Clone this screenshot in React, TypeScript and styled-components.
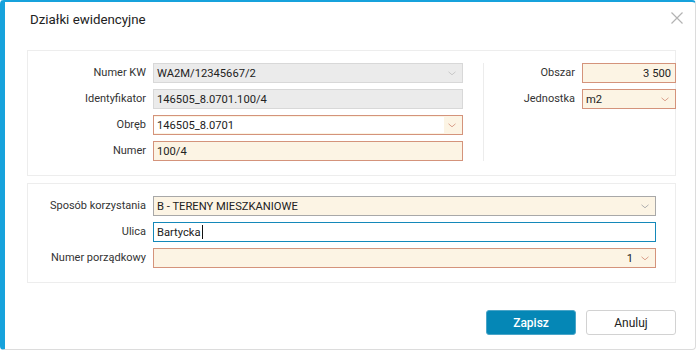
import React from "react";
import styled, { createGlobalStyle } from "styled-components";

const Global = createGlobalStyle`
  html, body { margin: 0; padding: 0; background: #ffffff; }
  body { font-family: Roboto, "Liberation Sans", Arial, sans-serif; }
  * { box-sizing: border-box; }
`;

const Dialog = styled.div`
  width: 696px;
  height: 350px;
  background: #fff;
  border-left: 5px solid #16a2dc;
  border-top: 2px solid #16a2dc;
  border-right: 1px solid #dcdcdc;
  border-bottom: 1px solid #dcdcdc;
  border-radius: 4px;
  display: flex;
  flex-direction: column;
`;

const Header = styled.div`
  height: 34px;
  display: flex;
  align-items: center;
  justify-content: space-between;
  padding: 0 12px 0 25px;
`;

const Title = styled.div`
  font-size: 13.3px;
  color: #222;
`;

const Close = styled.button`
  border: 0;
  background: none;
  padding: 0;
  width: 12px;
  height: 12px;
  display: flex;
  margin-top: -2px;
  cursor: pointer;
`;

const Body = styled.div`
  padding: 14px 19px 0 22px;
  display: flex;
  flex-direction: column;
  gap: 7px;
`;

const Section = styled.div<{ $split?: boolean }>`
  border: 1px solid #ededed;
  padding: 12px 19px 14px 0;
  display: grid;
  grid-template-columns: ${(p) => (p.$split ? "435px 1px 172px" : "1fr")};
  column-gap: 20px;
`;

const Fields = styled.div<{ $label: number }>`
  display: grid;
  grid-template-columns: ${(p) => p.$label}px 1fr;
  column-gap: 7px;
  row-gap: 6px;
  align-content: start;
`;

const Divider = styled.div`
  background: #ececec;
  height: 98px;
`;

const Label = styled.div`
  font-size: 11px;
  color: #333;
  text-align: right;
  height: 20px;
  line-height: 20px;
  white-space: nowrap;
`;

type Variant = "disabled" | "required" | "neutral" | "focus";

const boxColors: Record<Variant, { bg: string; border: string; arrow: string }> = {
  disabled: { bg: "#ebebeb", border: "#d8d8d8", arrow: "#c8c8c8" },
  required: { bg: "#fcf4e4", border: "#d4937b", arrow: "#d9a08c" },
  neutral: { bg: "#fcf4e4", border: "#a8a8a8", arrow: "#b0b0b0" },
  focus: { bg: "#ffffff", border: "#1488b9", arrow: "#999" },
};

const Box = styled.div<{ $v: Variant; $inset?: boolean }>`
  height: 20px;
  background: ${(p) => boxColors[p.$v].bg};
  border: 1px solid ${(p) => boxColors[p.$v].border};
  display: flex;
  align-items: stretch;
  padding: ${(p) => (p.$inset ? "1px 0 1px 0" : "0")};
  font-size: 11.2px;
  color: #222;
`;

const Value = styled.div<{ $right?: boolean; $white?: boolean }>`
  flex: 1;
  display: flex;
  align-items: center;
  justify-content: ${(p) => (p.$right ? "flex-end" : "flex-start")};
  padding: 0 4px 0 3px;
  background: ${(p) => (p.$white ? "#fff" : "transparent")};
  white-space: nowrap;
  overflow: hidden;
`;

const Caret = styled.span`
  display: inline-block;
  width: 1px;
  height: 14px;
  background: #111;
  margin-left: 1px;
`;

const ArrowCell = styled.div`
  width: 18px;
  display: flex;
  align-items: center;
  justify-content: center;
  padding-right: 2px;
`;

const Footer = styled.div`
  margin-top: 27px;
  padding-right: 19px;
  display: flex;
  justify-content: flex-end;
  gap: 10px;
`;

const Button = styled.button<{ $primary?: boolean }>`
  width: 90px;
  height: 25px;
  border-radius: 3px;
  font-family: Roboto, "Liberation Sans", Arial, sans-serif;
  font-size: 12px;
  cursor: pointer;
  background: ${(p) => (p.$primary ? "#0587b6" : "#fff")};
  color: ${(p) => (p.$primary ? "#fff" : "#222")};
  border: 1px solid ${(p) => (p.$primary ? "#4aa5c8" : "#d2d2d2")};
  font-weight: ${(p) => (p.$primary ? 500 : 400)};
`;

const Chevron = ({ color }: { color: string }) => (
  <svg width="8" height="5" viewBox="0 0 8 5">
    <path d="M0.5 0.8 L4 3.8 L7.5 0.8" fill="none" stroke={color} strokeWidth="1" />
  </svg>
);

const Field = ({
  v,
  children,
  arrow,
  right,
  white,
  inset,
}: {
  v: Variant;
  children?: React.ReactNode;
  arrow?: boolean;
  right?: boolean;
  white?: boolean;
  inset?: boolean;
}) => (
  <Box $v={v} $inset={inset}>
    <Value $right={right} $white={white}>
      {children}
    </Value>
    {arrow && (
      <ArrowCell>
        <Chevron color={boxColors[v].arrow} />
      </ArrowCell>
    )}
  </Box>
);

export default function App() {
  return (
    <>
      <Global />
      <Dialog>
        <Header>
          <Title>Działki ewidencyjne</Title>
          <Close aria-label="Zamknij">
            <svg width="12" height="12" viewBox="0 0 12 12">
              <path d="M0.5 0.5 L11.5 11.5 M11.5 0.5 L0.5 11.5" stroke="#b3b3b3" strokeWidth="1.2" />
            </svg>
          </Close>
        </Header>
        <Body>
          <Section $split>
            <Fields $label={118}>
              <Label>Numer KW</Label>
              <Field v="disabled" arrow>WA2M/12345667/2</Field>
              <Label>Identyfikator</Label>
              <Field v="disabled">146505_8.0701.100/4</Field>
              <Label>Obręb</Label>
              <Field v="required" arrow white inset>146505_8.0701</Field>
              <Label>Numer</Label>
              <Field v="required">100/4</Field>
            </Fields>
            <Divider />
            <Fields $label={71}>
              <Label>Obszar</Label>
              <Field v="required" right>3 500</Field>
              <Label>Jednostka</Label>
              <Field v="required" arrow>m2</Field>
            </Fields>
          </Section>
          <Section>
            <Fields $label={118}>
              <Label>Sposób korzystania</Label>
              <Field v="neutral" arrow>B - TERENY MIESZKANIOWE</Field>
              <Label>Ulica</Label>
              <Field v="focus">
                Bartycka
                <Caret />
              </Field>
              <Label>Numer porządkowy</Label>
              <Field v="required" arrow right>1</Field>
            </Fields>
          </Section>
        </Body>
        <Footer>
          <Button $primary>Zapisz</Button>
          <Button>Anuluj</Button>
        </Footer>
      </Dialog>
    </>
  );
}
